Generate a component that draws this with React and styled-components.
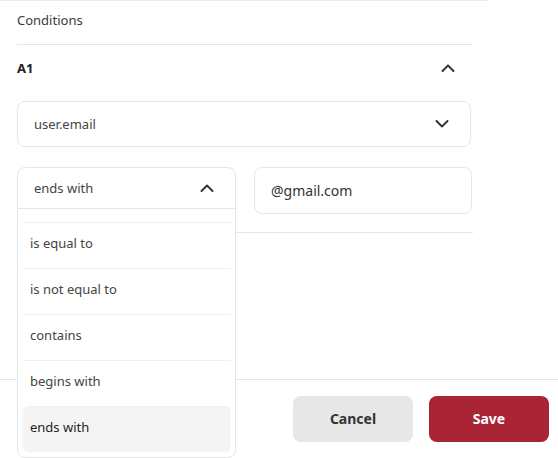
import React from 'react';
import styled, { createGlobalStyle } from 'styled-components';

const GlobalStyle = createGlobalStyle`
    html, body {
        margin: 0;
        padding: 0;
        background: #ffffff;
    }

    body {
        font-family: 'Noto Sans', 'Open Sans', sans-serif;
        color: #333333;
    }
`;

const operators = ['is equal to', 'is not equal to', 'contains', 'begins with', 'ends with'];

const Chevron = ({ up }) => (
    <svg width='14' height='8' viewBox='0 0 14 8' fill='none'>
        <path
            d={up ? 'M1.5 7L7 1.5L12.5 7' : 'M1.5 1L7 6.5L12.5 1'}
            stroke='#333'
            strokeWidth='1.9'
            strokeLinecap='round'
            strokeLinejoin='round'
        />
    </svg>
);

const App = () => {
    return (
        <Page>
            <GlobalStyle />
            <Main>
                <Panel>
                    <Header>Conditions</Header>
                    <Group>
                        <GroupHead>
                            <GroupTitle>A1</GroupTitle>
                            <Chevron up />
                        </GroupHead>
                        <Field>
                            <span>user.email</span>
                            <Chevron />
                        </Field>
                        <Row>
                            <OperatorSelect>
                                <OperatorHead>
                                    <span>ends with</span>
                                    <Chevron up />
                                </OperatorHead>
                                <Menu>
                                    {operators.map(op => (
                                        <MenuItem key={op} selected={op === 'ends with'}>
                                            {op}
                                        </MenuItem>
                                    ))}
                                </Menu>
                            </OperatorSelect>
                            <Input defaultValue='@gmail.com' />
                        </Row>
                    </Group>
                </Panel>
            </Main>
            <Footer>
                <Button>Cancel</Button>
                <Button primary>Save</Button>
            </Footer>
        </Page>
    );
};

export default App;

const Page = styled.div`
    display: flex;
    flex-direction: column;

    width: 558px;
    height: 458px;
    overflow: hidden;
`;

const Main = styled.div`
    flex: 1;
`;

const Panel = styled.div`
    width: 489px;
    border-top: 1px solid #ececec;
    position: relative;
    z-index: 2;
`;

const Header = styled.div`
    margin: 0 17px 0 17px;
    height: 43px;
    line-height: 38px;
    font-size: 13px;
    color: #3a3a3a;
    border-bottom: 1px solid #e6e6e6;
`;

const Group = styled.div`
    margin: 0 16px 0 17px;
    padding-bottom: 18px;
    border-bottom: 1px solid #e6e6e6;
`;

const GroupHead = styled.div`
    display: flex;
    align-items: center;
    justify-content: space-between;

    height: 46px;
    padding-right: 18px;
    margin-bottom: 10px;
`;

const GroupTitle = styled.div`
    font-size: 13px;
    font-weight: 700;
    color: #222;
`;

const Field = styled.div`
    display: flex;
    align-items: center;
    justify-content: space-between;

    box-sizing: border-box;
    width: 454px;
    height: 46px;
    padding: 0 21px 0 16px;
    border: 1px solid #e6e6e6;
    border-radius: 8px;
    font-size: 13px;
    color: #444;
`;

const Row = styled.div`
    display: flex;
    gap: 18px;
    margin-top: 20px;
`;

const OperatorSelect = styled.div`
    position: relative;
    width: 219px;
`;

const OperatorHead = styled.div`
    display: flex;
    align-items: center;
    justify-content: space-between;

    box-sizing: border-box;
    height: 42px;
    padding: 0 21px 0 16px;
    border: 1px solid #e6e6e6;
    border-radius: 8px 8px 0 0;
    font-size: 13px;
    color: #444;
`;

const Menu = styled.div`
    position: absolute;
    top: 41px;
    left: 0;
    right: 0;
    z-index: 3;

    box-sizing: border-box;
    padding: 13px 4px 5px 5px;
    background: #fff;
    border: 1px solid #e6e6e6;
    border-radius: 0 0 8px 8px;
`;

const MenuItem = styled.div`
    display: flex;
    align-items: center;

    box-sizing: border-box;
    height: 46px;
    padding: 0 0 5px 7px;
    border-top: 1px solid #efefef;
    border-radius: ${props => (props.selected ? '6px' : '0')};
    background: ${props => (props.selected ? '#f4f4f4' : 'transparent')};
    font-size: 13px;
    color: ${props => (props.selected ? '#1f1f1f' : '#444')};
`;

const Input = styled.input`
    box-sizing: border-box;
    width: 218px;
    height: 47px;
    padding: 0 16px;
    border: 1px solid #e6e6e6;
    border-radius: 8px;
    outline: none;
    font-family: 'Noto Sans', 'Open Sans', sans-serif;
    font-size: 14px;
    color: #333;
`;

const Footer = styled.div`
    display: flex;
    justify-content: flex-end;
    gap: 16px;

    height: 79px;
    padding: 16px 9px 0 0;
    box-sizing: border-box;
    border-top: 1px solid #e6e6e6;
`;

const Button = styled.button`
    width: 120px;
    height: 46px;
    padding-bottom: 3px;
    border: none;
    border-radius: 8px;
    background: ${props => (props.primary ? '#a92536' : '#e8e7e8')};
    color: ${props => (props.primary ? '#ffffff' : '#333333')};
    font-family: 'Noto Sans', 'Open Sans', sans-serif;
    font-size: 14px;
    font-weight: 700;
    cursor: pointer;
`;
